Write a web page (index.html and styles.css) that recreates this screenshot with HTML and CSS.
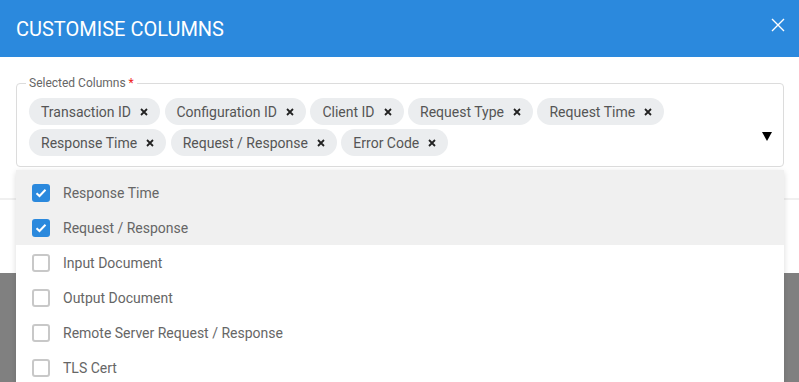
FILE: index.html
```html
<!DOCTYPE html>
<html lang="en">
<head>
    <meta charset="UTF-8">
    <meta name="viewport" content="width=device-width, initial-scale=1.0">
    <title>Customise Columns</title>
    <link rel="stylesheet" href="styles.css">
</head>
<body>
    <div class="modal">
        <div class="modal-header">
            <h1>CUSTOMISE COLUMNS</h1>
            <button class="close-btn" aria-label="Close">
                <svg width="14" height="14" viewBox="0 0 14 14"><path d="M1 1L13 13M13 1L1 13" stroke="#fff" stroke-width="1.4" fill="none"/></svg>
            </button>
        </div>
        <div class="modal-body">
            <fieldset class="select-box">
                <legend>Selected Columns <span class="req">*</span></legend>
                <div class="chips">
                    <span class="chip">Transaction ID<svg class="chip-x" width="8" height="8" viewBox="0 0 8 8"><path d="M1 1L7 7M7 1L1 7"/></svg></span>
                    <span class="chip">Configuration ID<svg class="chip-x" width="8" height="8" viewBox="0 0 8 8"><path d="M1 1L7 7M7 1L1 7"/></svg></span>
                    <span class="chip">Client ID<svg class="chip-x" width="8" height="8" viewBox="0 0 8 8"><path d="M1 1L7 7M7 1L1 7"/></svg></span>
                    <span class="chip">Request Type<svg class="chip-x" width="8" height="8" viewBox="0 0 8 8"><path d="M1 1L7 7M7 1L1 7"/></svg></span>
                    <span class="chip">Request Time<svg class="chip-x" width="8" height="8" viewBox="0 0 8 8"><path d="M1 1L7 7M7 1L1 7"/></svg></span>
                    <span class="chip">Response Time<svg class="chip-x" width="8" height="8" viewBox="0 0 8 8"><path d="M1 1L7 7M7 1L1 7"/></svg></span>
                    <span class="chip">Request / Response<svg class="chip-x" width="8" height="8" viewBox="0 0 8 8"><path d="M1 1L7 7M7 1L1 7"/></svg></span>
                    <span class="chip">Error Code<svg class="chip-x" width="8" height="8" viewBox="0 0 8 8"><path d="M1 1L7 7M7 1L1 7"/></svg></span>
                </div>
                <span class="caret"></span>
            </fieldset>
        </div>
        <div class="modal-footer"></div>
    </div>

    <ul class="dropdown">
        <li class="option selected first"><span class="check on"><svg width="12" height="10" viewBox="0 0 12 10"><path d="M1.5 5.2L4.5 8L10.5 1.8" stroke="#fff" stroke-width="2" fill="none"/></svg></span>Response Time</li>
        <li class="option selected"><span class="check on"><svg width="12" height="10" viewBox="0 0 12 10"><path d="M1.5 5.2L4.5 8L10.5 1.8" stroke="#fff" stroke-width="2" fill="none"/></svg></span>Request / Response</li>
        <li class="option"><span class="check"></span>Input Document</li>
        <li class="option"><span class="check"></span>Output Document</li>
        <li class="option"><span class="check"></span>Remote Server Request / Response</li>
        <li class="option"><span class="check"></span>TLS Cert</li>
    </ul>
</body>
</html>
```

FILE: styles.css
```css
body {
    font-family: Roboto, "Liberation Sans", sans-serif;
    background-color: #808080;
    margin: 0;
    padding: 0;
    height: 382px;
    overflow: hidden;
    position: relative;
}
.modal {
    background: #fff;
    height: 273px;
    display: flex;
    flex-direction: column;
}
.modal-header {
    background-color: #2b89dd;
    height: 57px;
    display: flex;
    align-items: center;
    justify-content: space-between;
    padding: 0 14px 0 16px;
}
.modal-header h1 {
    margin: 0;
    font-size: 20px;
    font-weight: 400;
    color: #fff;
}
.close-btn {
    background: none;
    border: 0;
    padding: 0;
    width: 14px;
    height: 14px;
    display: flex;
    margin-top: -8px;
}
.modal-body {
    padding: 19px 15px 0 16px;
    height: 143px;
    box-sizing: border-box;
    border-bottom: 2px solid #f0f0f0;
}
.select-box {
    margin: 0;
    border: 1px solid #dcdcdc;
    border-radius: 4px;
    padding: 8px 46px 10px 12px;
    position: relative;
}
.select-box legend {
    font-size: 12px;
    color: #666;
    padding: 0 3px;
    margin-left: -3px;
}
.req {
    color: #e22;
}
.chips {
    display: flex;
    flex-wrap: wrap;
    gap: 4px 4.5px;
}
.chip {
    display: inline-flex;
    align-items: center;
    height: 27px;
    padding: 0 12px;
    border-radius: 14px;
    background-color: #ebedef;
    color: #555;
    font-size: 14px;
}
.chip-x {
    margin-left: 9px;
    stroke: #222;
    stroke-width: 1.8;
    fill: none;
}
.caret {
    position: absolute;
    right: 11px;
    top: 42px;
    width: 0;
    height: 0;
    border-left: 5px solid transparent;
    border-right: 5px solid transparent;
    border-top: 9px solid #000;
}
.modal-footer {
    flex: 1;
}
.dropdown {
    position: absolute;
    top: 170px;
    left: 16px;
    width: 768px;
    margin: 0;
    padding: 0;
    list-style: none;
    background: #fff;
    box-shadow: 0 2px 6px rgba(0, 0, 0, 0.15);
}
.option {
    display: flex;
    align-items: center;
    height: 35px;
    padding-left: 16px;
    font-size: 14px;
    color: #666;
}
.option.first {
    height: 40px;
    padding-top: 5px;
    box-sizing: border-box;
}
.option.selected {
    background-color: #f0f0f0;
}
.check {
    width: 18px;
    height: 18px;
    box-sizing: border-box;
    border: 2px solid #c8c8c8;
    border-radius: 3px;
    margin-right: 13px;
    display: flex;
    align-items: center;
    justify-content: center;
    background: #fff;
}
.check.on {
    border: 0;
    background-color: #2b89dd;
}
```
